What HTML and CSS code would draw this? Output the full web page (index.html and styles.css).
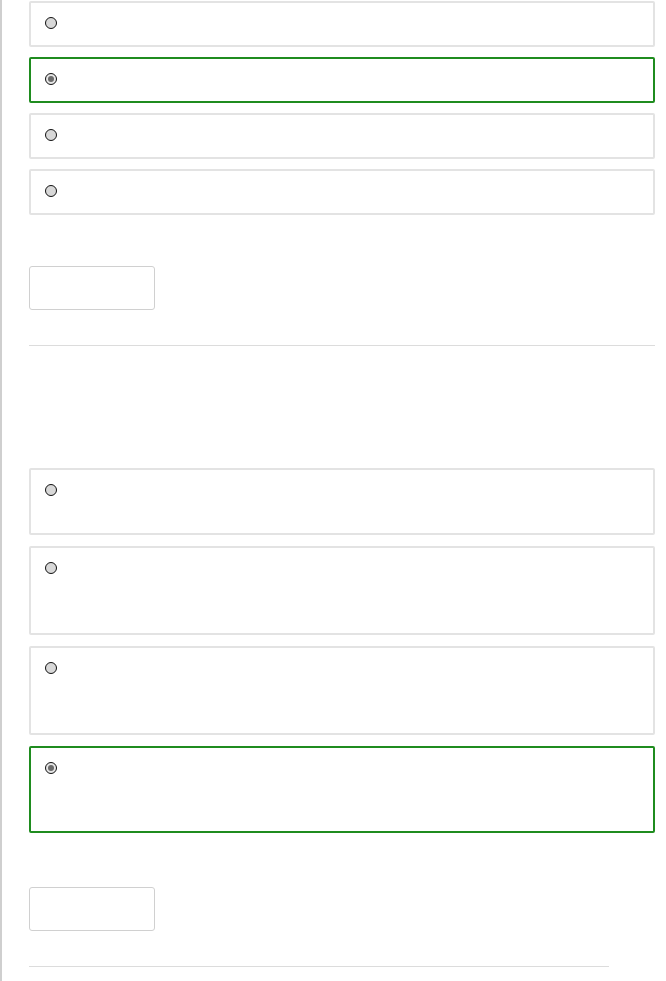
FILE: index.html
```html
<!DOCTYPE html>
<html>
<head>
<meta charset="utf-8">
<link rel="stylesheet" href="styles.css">
</head>
<body>
<div class="page">
  <section class="question q1">
    <div class="options">
      <label class="option h-s"><span class="radio"></span></label>
      <label class="option h-s correct"><span class="radio checked"></span></label>
      <label class="option h-s"><span class="radio"></span></label>
      <label class="option h-s"><span class="radio"></span></label>
    </div>
    <button class="submit" type="button"></button>
    <hr class="divider">
  </section>
  <section class="question q2">
    <div class="options wide-gap">
      <label class="option h-m"><span class="radio"></span></label>
      <label class="option h-l"><span class="radio"></span></label>
      <label class="option h-l"><span class="radio"></span></label>
      <label class="option h-l2 correct"><span class="radio checked"></span></label>
    </div>
    <button class="submit" type="button"></button>
    <hr class="divider short">
  </section>
</div>
</body>
</html>
```
FILE: styles.css
```css
html, body {
  margin: 0;
  padding: 0;
  background: #fff;
  font-family: "Liberation Sans", Arial, sans-serif;
}
.page {
  border-left: 2px solid #cfcfcf;
  margin-left: 0;
  min-height: 981px;
  box-sizing: border-box;
  padding: 1px 11px 0 27px;
}
.question {
  display: flex;
  flex-direction: column;
  align-items: flex-start;
}
.options {
  display: flex;
  flex-direction: column;
  gap: 10px;
  width: 100%;
}
.options.wide-gap {
  gap: 11px;
}
.option {
  display: flex;
  align-items: flex-start;
  box-sizing: border-box;
  border: 2px solid #e3e3e3;
  border-radius: 2px;
  padding: 14px 14px;
  width: 100%;
}
.option.correct {
  border-color: #1f8c1f;
}
.h-s { height: 46px; }
.h-m { height: 67px; }
.h-l { height: 89px; }
.h-l2 { height: 87px; }
.radio {
  width: 12px;
  height: 12px;
  box-sizing: border-box;
  border: 1px solid #111;
  border-radius: 50%;
  background: #d8d8d8;
  display: flex;
  align-items: center;
  justify-content: center;
}
.radio.checked {
  background: #e6e6e6;
}
.radio.checked::after {
  content: "";
  width: 6px;
  height: 6px;
  border-radius: 50%;
  background: #6a6a6a;
}
.submit {
  width: 126px;
  height: 44px;
  border: 1px solid #d0d0d0;
  border-radius: 3px;
  background: #fff;
  padding: 0;
}
.q1 .submit { margin-top: 51px; }
.q2 .submit { margin-top: 54px; }
.divider {
  width: 100%;
  border: 0;
  border-top: 1px solid #dcdcdc;
  margin: 35px 0 0 0;
}
.q1 .divider {
  margin-bottom: 122px;
}
.divider.short {
  width: 580px;
}
```
